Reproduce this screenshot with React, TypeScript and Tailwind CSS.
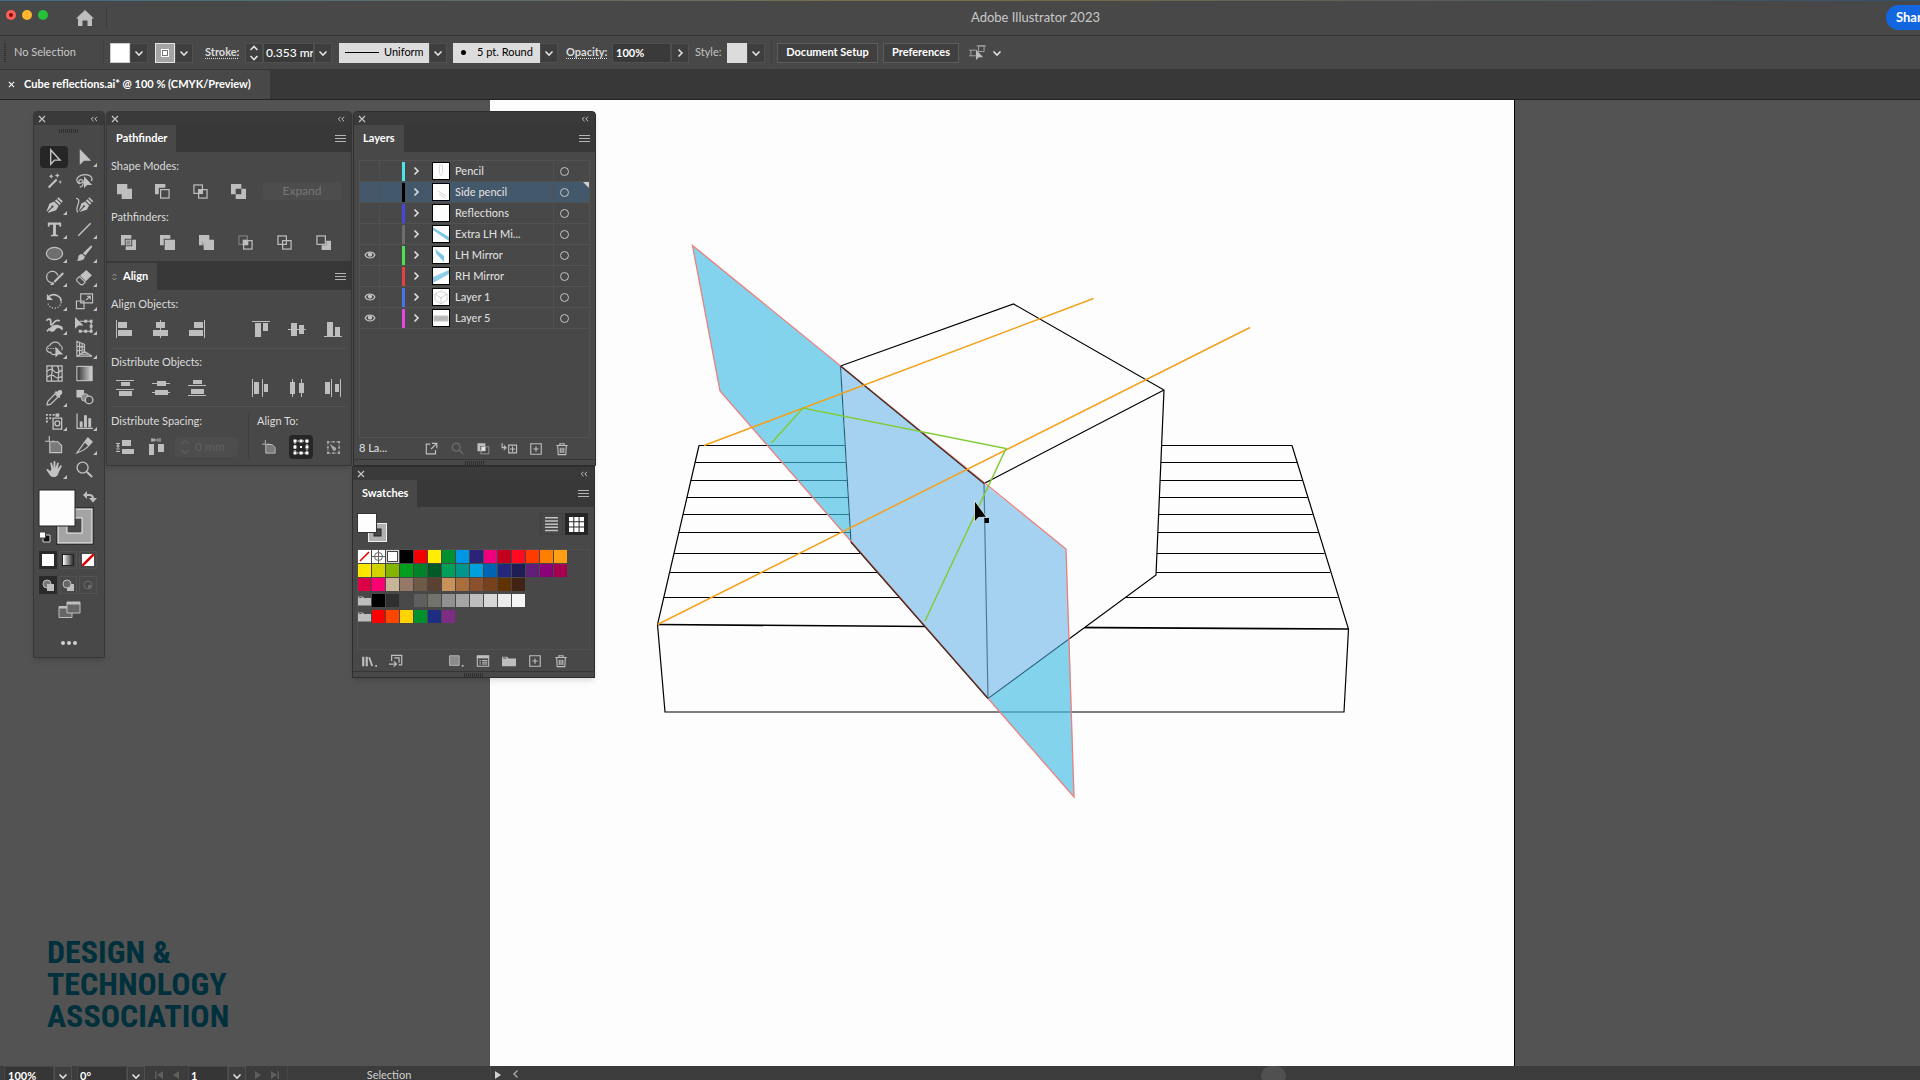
import type { ReactNode } from "react";

/* ---------- icons, drawn on a 20 × 20 grid ---------- */

const line = { fill: "none", stroke: "currentColor" } as const;

const toolArt: Record<string, ReactNode> = {
  select: <path d="M6 2v15l4-4.2h5.8z" {...line} strokeWidth="1.5" />,
  direct: <path d="M5 1v17l4.5-4.6H17z" />,
  wand: (
    <g>
      <path d="M3 15.5 11.5 7l1.6 1.6L4.6 17z" />
      <path d="m6.5 2 .8 1.7 1.7.8-1.7.8-.8 1.7-.8-1.7L4 4.5l1.7-.8zM13 1l.8 1.9 1.9.8-1.9.8L13 6.4l-.8-1.9-1.9-.8 1.9-.8zM16 8.5l.6 1.4 1.4.6-1.4.6-.6 1.4-.6-1.4-1.4-.6 1.4-.6z" />
    </g>
  ),
  lasso: (
    <g>
      <path d="M5 12.5C1 11 1 7 4 4.8 7.5 2 14 2 16.8 4.800c1.400 1.600 1.200 3.500.4 4.700" {...line} strokeWidth="1.3" />
      <path d="M8.500 9.200c-1.600-2.400-5-1-4.400 1.300.5 2 3.600 1.500 3.400-.6M8.500 9c.8 3.500-.5 6.300-3.500 7" {...line} strokeWidth="1.3" />
      <path d="M9.500 4.500v12.500l3.200-3.200h5.300z" />
    </g>
  ),
  pen: (
    <g>
      <path d="m12 3.500 4.800 4.600-1.700 1.500-4.700-4.600zM12.800 2.500l1.400-1.300 4.600 4.400-1.400 1.400z" />
      <path fillRule="evenodd" d="m9.600 5.800 4.700 4.500-2.500 4.700-8.300 2.600-.6-.5 4.700-4.800a1.200 1.200 0 1 0-.9-.8L2 16.300l-.4-.6 3.200-7.700z" />
    </g>
  ),
  curvature: (
    <g>
      <path d="m13 3.500 4.300 4.200-1.600 1.500-4.300-4.300zM13.900 2.500l1.200-1.200 4.200 4.100-1.200 1.200z" />
      <path d="m10.700 5.700 4.100 4.200-2.300 4.500-7.800 2.500 4.500-5a1.100 1.100 0 1 0-.9-.8L4 16l2.600-8z" />
      <path d="M1 2.500c3 0 3.500 2 2.600 5-1 3.500-3.300 8.500-.3 9.500" {...line} strokeWidth="1.3" />
    </g>
  ),
  type: <path d="M3 2.500h14v4.500h-1.500l-.7-2H11.500v10.300l2.300.5V17H6.200v-1.200l2.300-.5V5H5.200l-.7 2H3z" />,
  segment: <path d="M3.500 16.500 16.500 3.500" {...line} strokeWidth="1.5" />,
  ellipse: <ellipse cx="10" cy="10" rx="8.5" ry="6.5" fill="#6e6e6e" stroke="currentColor" strokeWidth="1.3" />,
  brush: (
    <path d="M17.500 1.800c.7.500.8 1 .3 1.600L11 12 8.300 9.700l8-7.500c.4-.5.8-.6 1.200-.4zM7.500 10.500l2.700 2.400c.3 3-2.500 5-8.700 4.600 2.200-1 1.700-2 2-3.800.3-2 2-3.300 4-3.200z" />
  ),
  shaper: (
    <g>
      <path d="M7 15.500A6 6 0 1 1 13.500 8" {...line} strokeWidth="1.3" />
      <path d="M18.500 4.500 20 6l-9.500 9.500L9 14zM8.300 14.700l1.500 1.500c-.5 1.500-2 2-4.800 1.500 1.700-.8 1.700-2.500 3.300-3z" />
    </g>
  ),
  eraser: (
    <g>
      <path d="m11.800 2 6 5.600-6.300 6.400-6.300-5.800z" />
      <path d="m4.500 9 6.300 5.800-2.600 2.700H6L1.800 13.500v-1.700z" {...line} strokeWidth="1.2" />
    </g>
  ),
  rotate: (
    <g>
      <path d="M4.500 4.500C9.500.8 17 4 17 10" {...line} strokeWidth="1.8" />
      <path d="M2 2v6.500h6.500z" />
      <path d="M17 10.500c-.5 8.500-12.500 8.500-14 1" {...line} strokeWidth="1.3" strokeDasharray="1.3 1.7" />
    </g>
  ),
  scale: <path d="M6 2h12.500v9.500H6zM1.500 9.500h8v8h-8zM11.500 8.500l4.500-4M12.500 4.500H16V8" {...line} strokeWidth="1.2" />,
  warp: (
    <g>
      <path d="M1.500 5c2-3 5-2 4.500 1.500-.3 3 .5 4 2.500 1.500 1.500-2 4.500-5 7-2.500" {...line} strokeWidth="1.8" />
      <path d="M4 14c4-5 8-6 14-3 1.500 2 1 4-.5 4-2-3-5-3-7 0-2 2.500-6 2-6.500-1zM1.500 15.500l2.500-3 1.500 1.500-3 2.800z" />
    </g>
  ),
  transform: (
    <g>
      <path d="M5 5.500h12v10.500H5.500" {...line} strokeWidth="1.2" />
      <path d="M0 1v12.500L3.500 10H9zM15.500 4h3v3h-3zM15.500 14.500h3v3h-3zM4 14.500h3v3H4zM9.800 4h3v3h-3zM9.800 14.500h3v3h-3zM15.500 9.300h3v3h-3z" />
    </g>
  ),
  shapeBuilder: (
    <g>
      <path d="M12.500 14.500C8 16.500 6 14.500 6 13 1 13.500 0 7 5 5.800c2.500-5 9.500-4.500 11 0 2.500.7 2.500 3.500 1.500 5" {...line} strokeWidth="1.2" />
      <path d="M3 9h11" {...line} strokeWidth="1.2" strokeDasharray="1.3 1.3" />
      <path d="M11 7v11.500l3.200-3.200h5z" />
    </g>
  ),
  perspective: (
    <path d="M2 1.500v15.500l8-4.800V4.500zM4.800 2.500v13M7.500 3.500v10.500M2 6.500l8 .8M2 11.500l8-1.200M10 12.200l8 5M2 17h16M5 15h9.500M7.500 13h4" {...line} strokeWidth="1.2" />
  ),
  mesh: (
    <path d="M2 2h16v16H2zM2 8c4-4 6-2 8 0s5 1 8-2M2 14c4-3 6-3 8-1s5 2 8 0M7 2c3 4-2 8 0 16M13 2c4 6 0 9 1 16" {...line} strokeWidth="1.3" />
  ),
  gradient: (
    <g>
      <defs>
        <linearGradient id="tool-gradient">
          <stop offset="0" stopColor="#303030" />
          <stop offset="1" stopColor="#d8d8d8" />
        </linearGradient>
      </defs>
      <rect x="2" y="2.5" width="16" height="15" fill="url(#tool-gradient)" stroke="currentColor" strokeWidth="1.2" />
    </g>
  ),
  eyedropper: (
    <g>
      <path d="m10.500 6.200 3.300 3.300L6 17l-3.500 1-.5-.5 1-3.500z" {...line} strokeWidth="1.3" />
      <path d="m10 4.500 1.500-1 1.500.5c2-4 7-1.500 4.500 2.500L15.800 8l.2 1.500-1 1z" />
    </g>
  ),
  blend: (
    <g>
      <path d="M1.500 2h8v8h-8z" />
      <circle cx="10.5" cy="10" r="4" fill="#8a8a8a" stroke="currentColor" />
      <circle cx="14.8" cy="12.5" r="4" fill="#484848" stroke="currentColor" strokeWidth="1.4" />
    </g>
  ),
  spray: (
    <g>
      <path d="M8.500 6.500h9v11.500h-9z" {...line} strokeWidth="1.4" />
      <circle cx="13" cy="12" r="2.6" {...line} strokeWidth="1.4" />
      <path d="M11 1.500h4V5h-4zM1 2h2v2H1zM4.500 2h2v2h-2zM8 2h2v2H8zM1 5.500h2v2H1zM4.500 5.500h2v2h-2zM1 9h2v2H1z" />
    </g>
  ),
  graph: <path d="M1.500 1.500h1.300v15H19v1.300H1.500zM5 10h3v6H5zM9.500 3.500h3V16h-3zM14 6.500h3V16h-3z" />,
  artboard: (
    <g>
      <path d="M5 6h8.500l4 4v7.500H5z" fill="#7a7a7a" stroke="currentColor" strokeWidth="1.2" />
      <path d="M4.500 0v5.500H0M7 5.500H10" {...line} strokeWidth="1.2" />
    </g>
  ),
  slice: (
    <g>
      <path d="m13.500 2 4.500 4-3 3.500-4-4zM10.500 6l4 4c-3 4-6 5.500-12.500 7.800z" {...line} strokeWidth="1.3" />
      <path d="m13.500 2 4.500 4-2.500 3-4.500-4z" />
    </g>
  ),
  hand: (
    <path d="M6.800 9.500 5.500 3.800c-.2-1.300 1.500-1.600 1.900-.4l1.400 5L9 2c0-1.300 1.900-1.300 1.900 0l.2 6.300 1.500-5c.4-1.200 2-.8 1.800.4l-1 5.900 2.400-3.500c.7-1 2.200-.2 1.600.9L14.500 13c-.8 3-2 5-5.500 5-2.800 0-3.700-1.500-4.800-3.500L1.800 11c-.7-1 .6-2 1.500-1.200l2.200 2z" />
  ),
  zoom: (
    <g {...line}>
      <circle cx="8" cy="8" r="5.8" strokeWidth="1.4" />
      <path d="m12.500 12.500 5.500 5.500" strokeWidth="2.2" />
    </g>
  ),
};

const tools: [string, string, boolean][] = [
  ["select", "Selection", false],
  ["direct", "Direct selection", true],
  ["wand", "Magic wand", false],
  ["lasso", "Lasso", false],
  ["pen", "Pen", true],
  ["curvature", "Curvature", false],
  ["type", "Type", true],
  ["segment", "Line segment", true],
  ["ellipse", "Ellipse", true],
  ["brush", "Paintbrush", true],
  ["shaper", "Shaper", true],
  ["eraser", "Eraser", true],
  ["rotate", "Rotate", true],
  ["scale", "Scale", true],
  ["warp", "Width", true],
  ["transform", "Free transform", true],
  ["shapeBuilder", "Shape builder", true],
  ["perspective", "Perspective grid", true],
  ["mesh", "Mesh", false],
  ["gradient", "Gradient", false],
  ["eyedropper", "Eyedropper", true],
  ["blend", "Blend", false],
  ["spray", "Symbol sprayer", true],
  ["graph", "Column graph", true],
  ["artboard", "Artboard", false],
  ["slice", "Slice", true],
  ["hand", "Hand", true],
  ["zoom", "Zoom", false],
];

/* pathfinder icons share a 16 × 16 grid */
const back = <rect x="1" y="1" width="9" height="9" {...line} strokeWidth="1.3" />;
const front = <rect x="6" y="6" width="9" height="9" {...line} strokeWidth="1.3" />;

const shapeModes: [string, ReactNode][] = [
  ["Unite", <path d="M0 0h11v5h5v11H5v-5H0z" />],
  ["Minus front", <g><path d="M0 0h11v4H4v7H0z" />{front}</g>],
  ["Intersect", <g>{back}{front}<path d="M5.500 5.500h5v5h-5z" /></g>],
  ["Exclude", <path fillRule="evenodd" d="M0 0h11v5h5v11H5v-5H0zM5 5v6h6V5z" />],
];

const pathfinders: [string, ReactNode][] = [
  ["Divide", <g><path d="M0 0h11v4H4v7H0zM12 5h4v11H5v-4h7z" /><rect x="5.5" y="5.5" width="5" height="5" fill="#8a8a8a" stroke="currentColor" /></g>],
  ["Trim", <path d="M0 0h11v4H4v7H0zM5 5h11v11H5z" />],
  ["Merge", <path d="M0 0h11v5h5v11H5v-3.500L4 6v5H0z" />],
  ["Crop", <g><rect x="1" y="1" width="9" height="9" fill="none" stroke="#7c7c7c" strokeWidth="1.3" />{front}<path d="M5 5h6v6H5z" /></g>],
  ["Outline", <g>{back}{front}</g>],
  ["Minus back", <g><path d="M11 6h5v10H6v-5h5z" />{back}</g>],
];

/* align icons share an 18 × 18 grid */
const alignH: [string, string][] = [
  ["Align left", "M0 0h1v18H0zM2 2h9v6H2zM2 10h14v6H2z"],
  ["Align centre", "M8 0h1v18H8zM4 2h9v6H4zM1 10h15v6H1z"],
  ["Align right", "M16 0h1v18h-1zM6 2h9v6H6zM1 10h14v6H1z"],
];
const alignV: [string, string][] = [
  ["Align top", "M0 1h18v1H0zM3 3h6v14H3zM11 3h5v8h-5z"],
  ["Align middle", "M0 9h18v1H0zM3 3h6v13H3zM11 5h5v9h-5z"],
  ["Align bottom", "M0 16h18v1H0zM3 2h6v14H3zM11 7h5v9h-5z"],
];
const distV: [string, string][] = [
  ["Distribute top", "M0 1h18v1H0zM5 3h9v4H5zM0 10h18v1H0zM3 12h13v5H3z"],
  ["Distribute middle", "M0 4h18v1H0zM5 2h9v5H5zM0 13h18v1H0zM3 11h13v5H3z"],
  ["Distribute bottom", "M5 1h9v4H5zM0 6h18v1H0zM3 10h13v5H3zM0 16h18v1H0z"],
];
const distH: [string, string][] = [
  ["Distribute left", "M0 0h1v18H0zM2 3h5v12H2zM10 0h1v18h-1zM12 5h4v8h-4z"],
  ["Distribute centre", "M4 0h1v18H4zM2 3h5v12H2zM13 0h1v18h-1zM11 4h5v10h-5z"],
  ["Distribute right", "M1 3h5v12H1zM7 0h1v18H7zM11 5h4v8h-4zM16 0h1v18h-1z"],
];

function Chevron({ className = "" }: { className?: string }) {
  return (
    <svg viewBox="0 0 10 10" className={`size-2.5 fill-none stroke-[#e0e0e0] stroke-[1.6] ${className}`}>
      <path d="m1.500 3.500 3.500 3.500 3.500-3.500" />
    </svg>
  );
}

function DropButton({ label, right = false }: { label: string; right?: boolean }) {
  return (
    <button aria-label={label} className="flex h-5 w-[18px] shrink-0 items-center justify-center border border-[#505050] bg-[#3e3e3e]">
      <Chevron className={right ? "-rotate-90" : ""} />
    </button>
  );
}

function PanelHeader() {
  return (
    <div className="flex h-[13px] items-center justify-between bg-[#3a3a3a] px-1 text-[#c4c4c4]">
      <button aria-label="Close panel">
        <svg viewBox="0 0 8 8" className="size-2 fill-none stroke-current stroke-[1.2]">
          <path d="m1 1 6 6M7 1 1 7" />
        </svg>
      </button>
      <button aria-label="Collapse panel" className="mr-0.5">
        <svg viewBox="0 0 8 6" className="h-1.5 w-2 fill-none stroke-current">
          <path d="M3.500.8 1.300 3l2.200 2.200M7 .8 4.800 3 7 5.200" />
        </svg>
      </button>
    </div>
  );
}

function PanelTab({ title, marker = false }: { title: string; marker?: boolean }) {
  return (
    <div className="flex h-[27px] items-stretch justify-between bg-[#383838]">
      <button className="flex items-center gap-1.5 bg-[#484848] px-[9px] font-bold text-white">
        {marker && (
          <svg viewBox="0 0 5 8" className="-ml-1 h-2 w-[5px] fill-none stroke-[#9a9a9a]">
            <path d="M.5 3 2.500 1l2 2M.5 5l2 2 2-2" />
          </svg>
        )}
        {title}
      </button>
      <button aria-label={`${title} menu`} className="mr-[5px] self-center">
        <svg viewBox="0 0 11 8" className="h-2 w-[11px] fill-[#b4b4b4]">
          <path d="M0 0h11v1H0zM0 3h11v1H0zM0 6h11v1H0z" />
        </svg>
      </button>
    </div>
  );
}

function AlignGroup({ items }: { items: [string, string][] }) {
  return (
    <div className="flex">
      {items.map(([label, d]) => (
        <button key={label} aria-label={label} className="flex w-9 items-center justify-center">
          <svg viewBox="0 0 18 18" className="size-[18px] fill-[#bebebe]">
            <path d={d} />
          </svg>
        </button>
      ))}
    </div>
  );
}

function PathIcons({ items, cell }: { items: [string, ReactNode][]; cell: string }) {
  return items.map(([label, art]) => (
    <button key={label} aria-label={label} className={`flex items-center justify-center ${cell}`}>
      <svg viewBox="0 0 16 16" className="size-[15px] fill-current text-[#bebebe]">
        {art}
      </svg>
    </button>
  ));
}

function ToolsPanel() {
  return (
    <section aria-label="Tools" className="w-[72px] self-start rounded-t-sm border border-[#383838] bg-[#484848] pb-3 shadow-md">
      <PanelHeader />
      <div className="mx-auto mt-1 h-1 w-5 bg-[repeating-linear-gradient(90deg,#2e2e2e_0_1px,transparent_1px_2px)]" />
      <div className="mx-[5px] mt-3 grid grid-cols-2">
        {tools.map(([id, label, more]) => (
          <button key={id} aria-label={label} className="relative flex h-6 items-center justify-center text-[#c2c2c2]">
            <span className={id === "select" ? "flex h-[22px] w-7 items-center justify-center rounded-sm bg-[#262626]" : "flex"}>
              <svg viewBox="0 0 20 20" className="size-[19px] fill-current">{toolArt[id]}</svg>
            </span>
            {more && (
              <svg viewBox="0 0 4 4" className="absolute right-0.5 bottom-0.5 size-1 fill-current">
                <path d="M4 0v4H0z" />
              </svg>
            )}
          </button>
        ))}
      </div>
      <div className="mt-2 pl-1">
        <svg viewBox="0 0 60 58" className="h-[58px] w-[60px]">
          <rect x="20" y="20" width="34" height="34" fill="#a4a4a4" stroke="#f0f0f0" />
          <rect x="18.5" y="18.5" width="37" height="37" fill="none" stroke="#222" strokeWidth=".6" />
          <rect x="29" y="29" width="15" height="15" fill="#484848" stroke="#f0f0f0" />
          <rect x="1" y="1" width="36" height="36" fill="#fdfdfd" stroke="#222" />
          <path d="M48 6h3.500c2.500 0 3.500 1.500 3.500 4" fill="none" stroke="#bebebe" strokeWidth="2" />
          <path d="M49 2v8l-4-4zM51 9h8l-4 4.500z" fill="#bebebe" />
          <path d="M5 46h7v7H5z" fill="#111" stroke="#d0d0d0" />
          <path d="M1.500 43h6v6h-6z" fill="#fff" stroke="#444" />
        </svg>
      </div>
      <div className="mt-1 flex gap-0.5 pl-[5px]">
        <button aria-label="Colour" className="flex size-[18px] items-center justify-center bg-[#2a2a2a]">
          <span className="size-3 bg-white" />
        </button>
        <button aria-label="Gradient fill" className="flex size-[18px] items-center justify-center border border-[#525252]">
          <span className="size-3 border border-[#222] bg-linear-to-r from-white to-[#333]" />
        </button>
        <button aria-label="No fill" className="flex size-[18px] items-center justify-center border border-[#525252]">
          <svg viewBox="0 0 12 12" className="size-3 bg-white"><path d="M0 12 12 0" stroke="#e00000" strokeWidth="2.5" /></svg>
        </button>
      </div>
      <div className="mt-[7px] flex gap-0.5 pl-[5px] text-[#bebebe]">
        <button aria-label="Draw normal" className="flex size-[18px] items-center justify-center bg-[#2a2a2a]">
          <svg viewBox="0 0 12 12" className="size-3"><circle cx="5" cy="5" r="4" fill="#777" stroke="currentColor" /><path d="M5 5h7v7H5z" fill="currentColor" /></svg>
        </button>
        <button aria-label="Draw behind" className="flex size-[18px] items-center justify-center border border-[#525252]">
          <svg viewBox="0 0 12 12" className="size-3"><path d="M5 5h7v7H5z" fill="currentColor" /><circle cx="5" cy="5" r="4" fill="#666" stroke="currentColor" /></svg>
        </button>
        <button aria-label="Draw inside" className="flex size-[18px] items-center justify-center border border-[#525252]">
          <svg viewBox="0 0 12 12" className="size-3"><circle cx="6" cy="6" r="4" fill="none" stroke="#6a6a6a" /><path d="M6 6h4a4 4 0 0 1-4 4z" fill="#6a6a6a" /></svg>
        </button>
      </div>
      <button aria-label="Screen mode" className="mx-auto mt-[7px] block">
        <svg viewBox="0 0 23 18" className="h-[18px] w-[23px]">
          <path d="M1 5.500h13v11H1z" fill="#666" stroke="#bebebe" />
          <path d="M1 5h13v2.500H1z" fill="#bebebe" />
          <path d="M9 1h13v11H9z" fill="#666" stroke="#bebebe" />
          <path d="M9 1h13v2.500H9z" fill="#bebebe" />
        </svg>
      </button>
      <button aria-label="Edit toolbar" className="mx-auto mt-[22px] flex gap-[2px]">
        <span className="size-1 rounded-full bg-[#d0d0d0]" />
        <span className="size-1 rounded-full bg-[#d0d0d0]" />
        <span className="size-1 rounded-full bg-[#d0d0d0]" />
      </button>
    </section>
  );
}

function PathfinderPanel() {
  return (
    <section aria-label="Pathfinder and Align" className="w-[246px] self-start rounded-t-sm border border-[#383838] bg-[#484848] shadow-md">
      <PanelHeader />
      <PanelTab title="Pathfinder" />
      <h3 className="mt-[5px] flex h-[18px] items-center pl-1">Shape Modes:</h3>
      <div className="-ml-0.5 flex h-8 items-center">
        <PathIcons items={shapeModes} cell="w-[38px]" />
        <button disabled className="ml-1.5 h-[18px] w-[78px] rounded-sm bg-[#4d4d4d] text-center text-xs text-[#767676]">Expand</button>
      </div>
      <h3 className="flex h-5 items-center pl-1">Pathfinders:</h3>
      <div className="ml-0.5 flex h-8 items-center pb-px">
        <PathIcons items={pathfinders} cell="w-[39px]" />
      </div>
      <div className="mt-0.5 border-t-2 border-[#383838]">
        <PanelTab title="Align" marker />
      </div>
      <h3 className="mt-1 flex h-5 items-center pl-1">Align Objects:</h3>
      <div className="flex h-[30px] items-center gap-7">
        <AlignGroup items={alignH} />
        <AlignGroup items={alignV} />
      </div>
      <h3 className="mx-1 mt-1 flex h-7 items-center border-t border-[#525252]">Distribute Objects:</h3>
      <div className="flex h-6 items-center gap-7">
        <AlignGroup items={distV} />
        <AlignGroup items={distH} />
      </div>
      <div className="mx-1 mt-1.5 flex border-t border-[#525252] pb-1.5">
        <div className="w-[137px]">
          <h3 className="flex h-7 items-center">Distribute Spacing:</h3>
          <div className="flex h-6 items-center">
            <button aria-label="Vertical distribute space" className="flex w-7 items-center justify-center">
              <svg viewBox="0 0 18 18" className="size-[18px] fill-[#bebebe]">
                <path d="M6 2h9v6H6zM6 11h12v5H6zM0 5h4v1H0zM0 13h4v1H0zM1.500 5h1v9h-1zM2 6l2 2.500H0zM2 13l2-2.500H0z" />
              </svg>
            </button>
            <button aria-label="Horizontal distribute space" className="flex w-9 items-center justify-center">
              <svg viewBox="0 0 18 18" className="size-[18px] fill-[#bebebe]">
                <path d="M1 6h5v11H1zM10 6h6v8h-6zM3.500 0h1v4h-1zM11.500 0h1v4h-1zM3 1.500h9v1H3zM4 2l2.500-2v4zM12 2l-2.500-2v4z" />
              </svg>
            </button>
            <div className="flex h-5 w-[63px] items-center rounded-sm bg-[#4d4d4d]">
              <span className="flex w-5 flex-col items-center">
                <svg viewBox="0 0 10 16" className="h-4 w-2.5 fill-none stroke-[#6c6c6c]"><path d="m1.500 5 3.500-3.500L8.500 5M1.500 11 5 14.500 8.500 11" /></svg>
              </span>
              <input aria-label="Spacing" disabled defaultValue="0 mm" className="w-10 bg-transparent text-xs text-[#606060]" />
            </div>
          </div>
        </div>
        <div className="mt-1.5 border-l border-[#3e3e3e] pl-2">
          <h3 className="-mt-1.5 flex h-7 items-center">Align To:</h3>
          <div className="flex h-6 items-center gap-2">
            <button aria-label="Align to artboard" className="flex size-6 items-center justify-center">
              <svg viewBox="0 0 20 20" className="size-[15px] fill-current text-[#bebebe]">{toolArt.artboard}</svg>
            </button>
            <button aria-label="Align to selection" className="flex size-6 items-center justify-center rounded-sm bg-[#262626]">
              <svg viewBox="0 0 16 16" className="size-4 fill-white">
                <path d="M2 2h12v12H2z" fill="none" stroke="#fff" strokeDasharray="1.5 1" />
                <path d="M.5.500h3v3h-3zM6.500.5h3v3h-3zM12.500.5h3v3h-3zM.5 6.500h3v3h-3zM12.500 6.500h3v3h-3zM.5 12.500h3v3h-3zM6.500 12.500h3v3h-3zM12.500 12.500h3v3h-3zM7 7h2v2H7z" />
              </svg>
            </button>
            <button aria-label="Align to key object" className="flex size-6 items-center justify-center">
              <svg viewBox="0 0 16 16" className="size-[15px] fill-[#a8a8a8]">
                <path d="M2 2h12v12H2z" fill="none" stroke="#a8a8a8" strokeDasharray="1.5 1.5" />
                <path d="M1 1h2.500v2.500H1zM7 1h2v2H7zM12.500 1H15v2.500h-2.500zM1 7h2v2H1zM13 7h2v2h-2zM1 12.500h2.500V15H1zM7 13h2v2H7zM12.500 12.500H15V15h-2.500zM4 4l5 3.500a2 2 0 1 1-2 2.500z" />
              </svg>
            </button>
          </div>
        </div>
      </div>
    </section>
  );
}

const layers: { name: string; bar: string; visible?: boolean; active?: boolean; thumb?: ReactNode }[] = [
  { name: "Pencil", bar: "bg-[#4fe3e8]", thumb: <path d="M6.500 2v8.500l1.500 2 1.500-2V2z" fill="none" stroke="#dcdcdc" /> },
  { name: "Side pencil", bar: "bg-black", active: true, thumb: <path d="m5 7 8 5M6 10l6 4" stroke="#d4d4d4" /> },
  { name: "Reflections", bar: "bg-[#4646e0]" },
  { name: "Extra LH Mi...", bar: "bg-[#6e6e6e]", thumb: <path d="M0 1.500 16 11v4L0 4z" fill="#7cc4e4" /> },
  { name: "LH Mirror", bar: "bg-[#4ee24e]", visible: true, thumb: <path d="m2 2 9 7v6L3.500 7z" fill="#7cc4e4" /> },
  { name: "RH Mirror", bar: "bg-[#e64040]", thumb: <path d="M0 9 16 2v4L0 15z" fill="#8fcdea" /> },
  { name: "Layer 1", bar: "bg-[#4a72e8]", visible: true, thumb: <path d="m2 5 6-3 6 3v6l-6 4-6-4zM2 5l6 4 6-4M8 9v6" fill="none" stroke="#c0c0c0" strokeWidth=".7" /> },
  { name: "Layer 5", bar: "bg-[#e846e0]", visible: true, thumb: <path d="M1 6h14v5H1z" fill="#b8b8b8" stroke="#c4c4c4" /> },
];

const footIcons: Record<string, ReactNode> = {
  export: <path d="M6 2.500H1.500v11H12V9M8 1.500h5.500V7M13.500 1.500 7 8" {...line} strokeWidth="1.3" />,
  find: <path d="M10.500 6a4.500 4.500 0 1 1-9 0 4.500 4.500 0 0 1 9 0zM9.500 9.500l4.500 4.500" {...line} strokeWidth="1.6" opacity=".3" />,
  mask: (
    <g>
      <rect x="4.5" y="5.500" width="9" height="8" fill="none" stroke="#8a8a8a" strokeWidth="1.3" />
      <path fillRule="evenodd" d="M.5 1.500h9v9h-9zM3.500 4.500v5h5v-5z" />
      <path d="M5 5.500h4.500v4.500H5z" fill="#e8e8e8" />
    </g>
  ),
  sublayer: (
    <g>
      <path d="M-1 1.500v5h4M1 4l2.500 2.500L1 9M6.500 3.500h9v9h-9z" {...line} strokeWidth="1.3" />
      <path d="M10.300 5h1.300v2.300H14v1.300h-2.400V11h-1.300V8.600H8V7.300h2.300z" />
    </g>
  ),
  add: <path d="M2 2h12v12H2zM8 5v6M5 8h6" {...line} strokeWidth="1.3" />,
  trash: <path d="M1.500 4h13M5.500 4V2h5v2M3 4l.7 10.500h8.600L13 4M6 6.500v6M8 6.500v6M10 6.500v6" {...line} strokeWidth="1.3" />,
  library: (
    <g>
      <path d="M-1 3h2.500v11H-1zM3 3h2.500v11H3z" />
      <path d="m6 4 2-.6L11.500 13.500l-2 .6zM14 12.500h2v2h-2z" />
    </g>
  ),
  importSwatch: (
    <g {...line} strokeWidth="1.4">
      <path d="M3 8V1.500h11.500v11H11" />
      <path d="M6 4.500h5.500V10M0 11.500h8M5.500 8.500l3 3-3 3" />
    </g>
  ),
  kind: (
    <g>
      <path d="M-.5 2h11v11h-11z" fill="#8a8a8a" stroke="currentColor" />
      <path d="M13.500 12.500h2v2h-2z" />
    </g>
  ),
  options: (
    <g>
      <path d="M1.500 2h13v12h-13zM4 7.500h1.500M7 7.500h6M4 9.500h1.500M7 9.500h6M4 11.500h1.500M7 11.500h6" {...line} strokeWidth="1.2" />
      <path d="M1 2h14v3H1z" />
    </g>
  ),
  folder: <path d="M0 3h6l1.500 2H16v9H0zM1 4v1h4.500L5 4z" fillRule="evenodd" />,
};

function FootIcon({ id, label }: { id: string; label: string }) {
  return (
    <button aria-label={label} className="flex w-[26px] items-center justify-center">
      <svg viewBox="0 0 16 16" className="size-3.5 overflow-visible fill-current text-[#bebebe]">{footIcons[id]}</svg>
    </button>
  );
}

function Grip() {
  return (
    <div className="flex h-1.5 items-center justify-center border-t border-[#363636]">
      <div className="h-1 w-5 bg-[repeating-linear-gradient(90deg,#2e2e2e_0_1px,transparent_1px_2px)]" />
    </div>
  );
}

function LayersPanel() {
  return (
    <section aria-label="Layers" className="rounded-t-sm border border-[#2e2e2e] bg-[#484848] shadow-md">
      <PanelHeader />
      <PanelTab title="Layers" />
      <ul className="mx-[5px] mt-2 h-[278px] border border-[#525252]">
        {layers.map((l) => (
          <li key={l.name} className={`relative flex h-[21px] items-center border-b border-[#525252] ${l.active ? "bg-[#44586c]" : ""}`}>
            <button aria-label={`Toggle ${l.name}`} className="flex w-5 items-center justify-center self-stretch border-r border-[#505050]">
              {l.visible && (
                <svg viewBox="0 0 14 10" className="h-2 w-3 fill-none stroke-[#c4c4c4] stroke-[1.4]">
                  <path d="M.8 5C3.500 0 10.500 0 13.200 5 10.500 10 3.500 10 .8 5z" />
                  <circle cx="7" cy="4.5" r="2" fill="#c4c4c4" />
                </svg>
              )}
            </button>
            <span className="w-[22px]" />
            <span className={`h-[19px] w-[3px] ${l.bar}`} />
            <button aria-label={`Expand ${l.name}`} className="flex w-[22px] justify-center">
              <Chevron className="-rotate-90" />
            </button>
            <svg viewBox="0 0 16 16" className="ml-[5px] size-[18px] border border-black bg-[#fdfdfd]">{l.thumb}</svg>
            <span className="ml-[5px] flex-1 font-medium">{l.name}</span>
            <span className="flex w-9 items-center self-stretch border-l border-[#505050] pl-1.5">
              <button aria-label={`Target ${l.name}`} className="size-[9px] rounded-full border border-[#c4c4c4]" />
            </span>
            {l.active && (
              <svg viewBox="0 0 6 6" className="absolute top-0 right-0 size-1.5 fill-[#d0d0d0]"><path d="M0 0h6v6z" /></svg>
            )}
          </li>
        ))}
      </ul>
      <div className="flex h-[21px] items-center justify-between pr-5 pl-[5px]">
        <span className="font-medium">8 La...</span>
        <div className="flex">
          <FootIcon id="export" label="Collect for export" />
          <FootIcon id="find" label="Locate object" />
          <FootIcon id="mask" label="Clipping mask" />
          <FootIcon id="sublayer" label="New sublayer" />
          <FootIcon id="add" label="New layer" />
          <FootIcon id="trash" label="Delete layer" />
        </div>
      </div>
      <Grip />
    </section>
  );
}

const swatchRows: string[][] = [
  ["bg-black", "bg-[#f00000]", "bg-[#ffee00]", "bg-[#00912e]", "bg-[#0096e6]", "bg-[#2a2377]", "bg-[#f0007d]", "bg-[#c5001f]", "bg-[#ff0a1e]", "bg-[#ff3c00]", "bg-[#ff7d00]", "bg-[#ffa014]"],
  ["bg-[#ffe600]", "bg-[#d2d200]", "bg-[#82b400]", "bg-[#00a01e]", "bg-[#008228]", "bg-[#005a28]", "bg-[#00a05a]", "bg-[#00968c]", "bg-[#00a0dc]", "bg-[#0064b4]", "bg-[#23287d]", "bg-[#1e1e55]", "bg-[#5f1e78]", "bg-[#8c0078]", "bg-[#a50050]"],
  ["bg-[#dc0046]", "bg-[#ff0073]", "bg-[#c8b496]", "bg-[#967869]", "bg-[#6e5a46]", "bg-[#5a4132]", "bg-[#c8915a]", "bg-[#aa6e3c]", "bg-[#8c502d]", "bg-[#78411e]", "bg-[#5f3200]", "bg-[#412314]"],
  ["bg-black", "bg-[#2f2f2f]", "bg-[#494949]", "bg-[#5f5f5f]", "bg-[#73736e]", "bg-[#919191]", "bg-[#a5a5a5]", "bg-[#bebebe]", "bg-[#d7d7d7]", "bg-[#ebebeb]", "bg-[#f5f5f5]"],
  ["bg-[#ff0000]", "bg-[#ff4600]", "bg-[#ffd200]", "bg-[#00912e]", "bg-[#1e2d82]", "bg-[#7d2d82]"],
];

function SwatchRow({ row, lead, className = "" }: { row: number; lead?: ReactNode; className?: string }) {
  return (
    <div className={`flex gap-px ${className}`}>
      {lead}
      {swatchRows[row].map((c, i) => (
        <button key={i} aria-label={`Swatch ${row + 1}.${i + 1}`} className={`size-[13px] ${c}`} />
      ))}
    </div>
  );
}

const folder = (
  <svg viewBox="0 0 16 16" className="size-[13px] fill-[#bebebe]">{footIcons.folder}</svg>
);

function SwatchesPanel() {
  return (
    <section aria-label="Swatches" className="mr-px -ml-px border border-[#2e2e2e] bg-[#484848] shadow-md">
      <PanelHeader />
      <PanelTab title="Swatches" />
      <div className="flex h-[42px] items-start justify-between pt-1.5 pr-1.5 pl-1">
        <svg viewBox="0 0 32 30" className="h-[30px] w-8">
          <rect x="11.5" y="10.5" width="18" height="18" fill="#b0b0b0" stroke="#f0f0f0" />
          <rect x="17" y="16" width="7" height="7" fill="#484848" stroke="#222" />
          <rect x=".5" y=".5" width="19" height="19" fill="#fdfdfd" stroke="#333" />
        </svg>
        <div className="flex gap-0.5">
          <button aria-label="List view" className="flex h-[22px] w-[23px] items-center justify-center border border-[#404040]">
            <svg viewBox="0 0 13 16" className="h-4 w-[13px] fill-[#c4c4c4]"><path d="M0 1h13v1.500H0zM0 4.200h13v1.500H0zM0 7.400h13v1.500H0zM0 10.600h13v1.500H0zM0 13.800h13v1.500H0z" /></svg>
          </button>
          <button aria-label="Thumbnail view" className="flex h-[22px] w-[23px] items-center justify-center bg-[#262626]">
            <svg viewBox="0 0 15 15" className="size-[15px] fill-white"><path d="M0 0h4.300v4.300H0zM5.300 0h4.300v4.300H5.300zM10.600 0H15v4.300h-4.400zM0 5.300h4.300v4.300H0zM5.300 5.300h4.300v4.300H5.300zM10.600 5.300H15v4.300h-4.400zM0 10.600h4.300V15H0zM5.300 10.600h4.300V15H5.300zM10.600 10.600H15V15h-4.400z" /></svg>
          </button>
        </div>
      </div>
      <div className="mx-1 flex h-[101px] flex-col gap-px border border-[#505050]">
        <SwatchRow
          row={0}
          lead={
            <>
              <button aria-label="None"><svg viewBox="0 0 13 13" className="size-[13px] bg-white"><path d="m2 11 9-9" stroke="#e00000" strokeWidth="1.6" /></svg></button>
              <button aria-label="Registration"><svg viewBox="0 0 13 13" className="size-[13px] bg-white"><path d="M6.500 0v13M0 6.500h13M10.500 6.500a4 4 0 1 1-8 0 4 4 0 0 1 8 0z" fill="none" stroke="#666" /></svg></button>
              <button aria-label="White" className="flex size-[13px] items-center justify-center bg-[#d8d8d8]"><span className="size-[11px] border border-[#444] bg-white" /></button>
            </>
          }
        />
        <SwatchRow row={1} />
        <SwatchRow row={2} />
        <SwatchRow row={3} lead={folder} className="mt-0.5" />
        <SwatchRow row={4} lead={folder} className="mt-0.5" />
      </div>
      <div className="flex h-[21px] items-center justify-between pr-5 pl-1">
        <div className="flex">
          <FootIcon id="library" label="Swatch libraries" />
          <FootIcon id="importSwatch" label="Add to library" />
        </div>
        <div className="flex">
          <FootIcon id="kind" label="Swatch kinds" />
          <FootIcon id="options" label="Swatch options" />
          <FootIcon id="folder" label="New colour group" />
          <FootIcon id="add" label="New swatch" />
          <FootIcon id="trash" label="Delete swatch" />
        </div>
      </div>
      <Grip />
    </section>
  );
}

/* ---------- artwork ---------- */

const boardLines = [445.5, 462.5, 480.5, 497.5, 514.5, 532.5, 553.5, 572.5, 597.5];

function Artwork() {
  return (
    <svg viewBox="490 100 1024 966" className="h-[966px] w-[1024px]">
      <g fill="none" stroke="#000" strokeWidth="1.2">
        {boardLines.map((y) => (
          <path key={y} d={`M${699 - (y - 445.5) * 0.232} ${y}H${1292 + (y - 445.5) * 0.301}`} />
        ))}
        <path d="M699 445.500 657.500 624.500 665 712h679l4.500-83L1292 445.500" />
        <path d="m657.500 624.500 270 2 421 2.500" strokeWidth="1.7" />
        <path d="m840.500 366 173-62 150.500 86-8 185-168 123.500L851 542z" fill="#fdfdfd" />
        <path d="m840.500 366 143.500 117.500L1164 390M984 483.500l4 215" />
      </g>
      <g opacity=".65">
        <path d="m692.500 245.500 148 120.500L851 542 720 391z" fill="#42bde6" />
        <path d="M840.500 366 984 483.500 1066 549l3.500 89.500L988 698.500 851 542z" fill="#78bceb" />
        <path d="m1069.500 638.500 4.500 158.500-86-98.500z" fill="#42bde6" />
      </g>
      <path d="m692.500 245.500 373.500 303.500 8 248L720 391z" fill="none" stroke="#ec7f7c" strokeWidth="1.3" />
      <path d="m840.500 366 143.500 117.500M851 542l137 156.500" fill="none" stroke="#4a2e22" strokeWidth="1.2" />
      <g fill="none" strokeWidth="1.5">
        <path d="M704 445.500 1093.500 298.500M657.500 624.500 1250 327.500" stroke="#f2a11c" />
        <path d="M771.500 443 803 408l203 40.500L925 621" stroke="#80cc38" />
      </g>
      <path d="M974.500 500.500V522l4-4.500 8-.5z" stroke="#fff" strokeWidth=".7" />
      <path d="M984.500 518h4.500v5h-4.500z" />
    </svg>
  );
}

/* ---------- window ---------- */

function TitleBar() {
  return (
    <div className="flex h-[35px] items-start border-b border-[#363636]">
      <div className="flex gap-1.5 pt-[9px] pl-1.5">
        <button aria-label="Close" className="flex size-2.5 items-center justify-center rounded-full bg-[#ff5f57]"><span className="size-1 rounded-full bg-[#7a0c08]" /></button>
        <button aria-label="Minimise" className="size-2.5 rounded-full bg-[#ffb52c]" />
        <button aria-label="Full screen" className="size-2.5 rounded-full bg-[#25c13a]" />
      </div>
      <button aria-label="Home" className="ml-7 pt-2">
        <svg viewBox="0 0 18 17" className="h-[17px] w-[18px] fill-[#bebebe]"><path d="m9 1 9 8.500h-2V17h-4.500v-5.500h-5V17H2V9.500H0z" /></svg>
      </button>
      <span className="mt-1.5 ml-3 h-5 border-l border-[#3c3c3c]" />
      <h1 className="flex flex-1 justify-center pt-[7px] pl-[78px] text-[13px] leading-[18px] text-[#c8c8c8]">Adobe Illustrator 2023</h1>
      <button className="mt-1 h-[25px] w-[34px] overflow-hidden rounded-l-full bg-[#1267e0] pl-2.5 text-left text-[13px] font-bold text-white">Share</button>
    </div>
  );
}

function ControlBar() {
  return (
    <div className="flex h-[34px] items-center border-b border-[#363636]">
      <span className="ml-1 h-5 w-0.5 bg-[repeating-linear-gradient(180deg,#2e2e2e_0_1px,transparent_1px_2px)]" />
      <span className="ml-2 w-[89px] text-[#c8c8c8]">No Selection</span>
      <span className="mr-1.5 h-6 border-l border-[#404040]" />
      <button aria-label="Fill" className="size-5 border border-[#ccc] bg-white" />
      <DropButton label="Fill options" />
      <button aria-label="Stroke colour" className="ml-[7px] flex size-5 items-center justify-center border border-[#e4e4e4] bg-[#a4a4a4]">
        <span className="flex size-2 items-center justify-center border border-white bg-[#777]"><span className="size-1 bg-white" /></span>
      </button>
      <DropButton label="Stroke colour options" />
      <label htmlFor="stroke-width" className="ml-3 w-10 font-bold underline decoration-dotted underline-offset-2">Stroke:</label>
      <button aria-label="Stroke width stepper" className="flex h-5 w-[18px] items-center justify-center border border-[#505050] bg-[#3e3e3e]">
        <svg viewBox="0 0 10 16" className="h-4 w-2.5 fill-none stroke-[#e0e0e0] stroke-[1.6]"><path d="m1.500 5 3.500-3.500L8.500 5M1.500 11 5 14.500 8.500 11" /></svg>
      </button>
      <input id="stroke-width" defaultValue="0.353 mr" className="h-5 w-[51px] border border-[#505050] bg-[#3a3a3a] pl-0.5 text-xs font-medium text-white" />
      <DropButton label="Stroke widths" />
      <label className="ml-[7px] flex h-5 w-[90px] items-center justify-between bg-[#dcdcdc] px-1.5 text-black">
        <span className="w-[34px] border-t border-black" />
        <select aria-label="Width profile" className="w-[39px] appearance-none bg-transparent"><option>Uniform</option></select>
      </label>
      <DropButton label="Width profiles" />
      <label className="ml-1.5 flex h-5 w-[87px] items-center justify-between bg-[#dcdcdc] px-[5px] pl-2 text-black">
        <span className="size-[5px] rounded-full bg-black" />
        <select aria-label="Brush" className="w-[58px] appearance-none bg-transparent"><option>5 pt. Round</option></select>
      </label>
      <DropButton label="Brushes" />
      <label htmlFor="opacity" className="ml-2 w-[46px] font-bold underline decoration-dotted underline-offset-2">Opacity:</label>
      <input id="opacity" defaultValue="100%" className="h-5 w-[59px] border border-[#505050] bg-[#3a3a3a] pl-[3px] font-bold text-white" />
      <DropButton label="Opacity slider" right />
      <span className="ml-1.5 w-8 text-[#c4c4c4]">Style:</span>
      <button aria-label="Graphic style" className="size-5 bg-[#dcdcdc]" />
      <DropButton label="Graphic styles" />
      <span className="mr-[5px] ml-1.5 h-6 border-l border-[#404040]" />
      <button className="h-5 w-[101px] border border-[#5c5c5c] bg-[#404040] font-bold text-white">Document Setup</button>
      <button className="ml-[5px] h-5 w-[76px] border border-[#5c5c5c] bg-[#404040] font-bold text-white">Preferences</button>
      <button aria-label="Select similar" className="ml-2.5 flex items-center gap-1.5">
        <svg viewBox="0 0 18 18" className="size-[17px] fill-none stroke-[#a8a8a8]">
          <path d="M2 6.500h6v6H2zM10 2h6v6h-6zM0 6.500h2M0 12.500h2M8 2h10" />
          <path d="M7.500 6v11l3-3H15z" className="fill-[#bebebe] stroke-none" />
        </svg>
        <Chevron />
      </button>
    </div>
  );
}

function StatusBar() {
  return (
    <div className="flex h-3.5 items-start overflow-hidden bg-[#3c3c3c] pl-1">
      <input aria-label="Zoom level" defaultValue="100%" className="h-[18px] w-[50px] border border-[#464646] bg-[#363636] pl-[3px] font-bold text-white" />
      <DropButton label="Zoom levels" />
      <input aria-label="Rotation" defaultValue="0°" className="ml-[5px] h-[18px] w-[50px] border border-[#464646] bg-[#363636] pl-0.5 font-bold text-white" />
      <DropButton label="Rotations" />
      <div className="ml-2.5 flex h-[18px] items-center gap-2.5 text-[#5e5e5e]">
        <button aria-label="First artboard"><svg viewBox="0 0 8 8" className="size-2 fill-current"><path d="M0 0h1.500v8H0zM8 0v8L2 4z" /></svg></button>
        <button aria-label="Previous artboard"><svg viewBox="0 0 6 8" className="h-2 w-1.5 fill-current"><path d="M6 0v8L0 4z" /></svg></button>
      </div>
      <input aria-label="Artboard" defaultValue="1" className="ml-[9px] h-[18px] w-10 border border-[#464646] bg-[#363636] pl-0.5 font-bold text-white" />
      <DropButton label="Artboards" />
      <div className="ml-[9px] flex h-[18px] items-center gap-2.5 text-[#5e5e5e]">
        <button aria-label="Next artboard"><svg viewBox="0 0 6 8" className="h-2 w-1.5 fill-current"><path d="M0 0v8l6-4z" /></svg></button>
        <button aria-label="Last artboard"><svg viewBox="0 0 8 8" className="size-2 fill-current"><path d="M6.500 0H8v8H6.500zM0 0v8l6-4z" /></svg></button>
      </div>
      <span className="ml-2 h-[18px] w-[204px] border-x border-[#464646] text-center leading-[18px] text-[#d0d0d0]">Selection</span>
      <button aria-label="Status options" className="ml-1 flex h-[18px] items-center"><svg viewBox="0 0 6 8" className="h-2 w-1.5 fill-[#d0d0d0]"><path d="M0 0v8l6-4z" /></svg></button>
      <button aria-label="Scroll left" className="ml-2.5 flex h-4 items-center"><Chevron className="rotate-90 opacity-60" /></button>
      <div className="flex flex-1 justify-center pl-[5.5%]"><span className="h-5 w-[25px] rounded-xl bg-[#505050]" /></div>
    </div>
  );
}

export default function App() {
  return (
    <div className="flex h-screen flex-col overflow-hidden bg-[#484848] font-['Lato','Noto_Sans',sans-serif] text-[11px] text-[#dcdcdc]">
      <div className="h-px shrink-0 bg-linear-to-r from-[#3f6d85] via-[#7a6c45] to-[#35506a]" />
      <header className="shrink-0">
        <TitleBar />
        <ControlBar />
        <div className="flex h-[30px] items-stretch border-b border-[#222] bg-[#383838]">
          <div className="flex w-[270px] items-center bg-[#484848] pl-2">
            <button aria-label="Close document">
              <svg viewBox="0 0 8 8" className="size-[7px] fill-none stroke-white stroke-[1.2]"><path d="m1 1 6 6M7 1 1 7" /></svg>
            </button>
            <button className="ml-[9px] font-bold whitespace-nowrap text-white">Cube reflections.ai* @ 100 % (CMYK/Preview)</button>
          </div>
        </div>
      </header>

      <main className="relative min-h-0 flex-1 overflow-hidden bg-[#535353]">
        <div className="ml-[490px] w-[1025px] border-r border-b border-black bg-[#fdfdfd]">
          <Artwork />
        </div>
        <div className="absolute top-[11px] left-[33px] flex gap-px">
          <ToolsPanel />
          <PathfinderPanel />
          <div className="flex w-[243px] flex-col">
            <LayersPanel />
            <SwatchesPanel />
          </div>
        </div>
        <p className="absolute bottom-[34px] left-[47px] font-['Roboto_Condensed','Open_Sans_Condensed',sans-serif] text-[32px] leading-8 font-bold text-[#00303c]">
          DESIGN &amp;
          <br />
          TECHNOLOGY
          <br />
          ASSOCIATION
        </p>
      </main>

      <footer className="shrink-0">
        <StatusBar />
      </footer>
    </div>
  );
}
